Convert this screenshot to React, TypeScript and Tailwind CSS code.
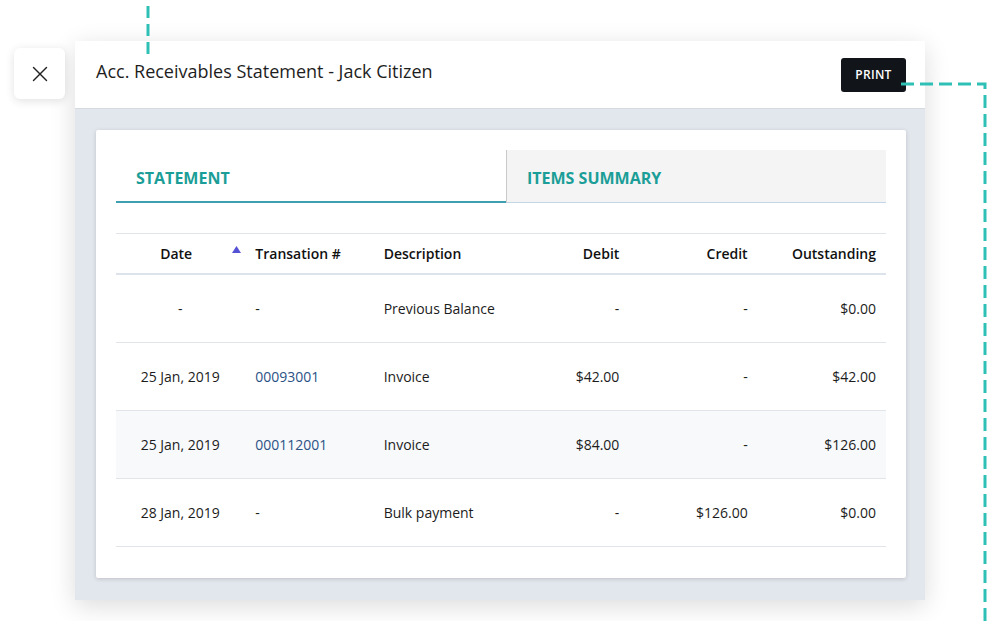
import { X } from "lucide-react";

const rows = [
  { date: "-", txn: "-", link: false, desc: "Previous Balance", debit: "-", credit: "-", out: "$0.00" },
  { date: "25 Jan, 2019", txn: "00093001", link: true, desc: "Invoice", debit: "$42.00", credit: "-", out: "$42.00" },
  { date: "25 Jan, 2019", txn: "000112001", link: true, desc: "Invoice", debit: "$84.00", credit: "-", out: "$126.00", shaded: true },
  { date: "28 Jan, 2019", txn: "-", link: false, desc: "Bulk payment", debit: "-", credit: "$126.00", out: "$0.00" },
];

export default function App() {
  return (
    <div
      className="relative w-[1003px] h-[621px] bg-white overflow-hidden text-[#1c1c1c]"
      style={{ fontFamily: '"Open Sans", "Noto Sans", sans-serif' }}
    >
      {/* Callout lines */}
      <svg className="absolute left-0 top-0 pointer-events-none z-10" width="1003" height="621">
        <path d="M148 6 V54" stroke="#2ebfb5" strokeWidth="3" strokeDasharray="12 6" fill="none" />
        <path d="M901 84 H985 V621" stroke="#2ebfb5" strokeWidth="3" strokeDasharray="13 6" fill="none" />
      </svg>

      {/* Close */}
      <button className="absolute left-[14px] top-[48px] w-[51px] h-[51px] rounded-md bg-white flex items-center justify-center shadow-[0_2px_10px_rgba(0,0,0,0.12)]">
        <X className="w-[26px] h-[26px] text-[#222]" strokeWidth={1.3} />
      </button>

      <div className="pl-[75px] pt-[41px]">
        <div className="w-[850px] shadow-[0_6px_24px_rgba(0,0,0,0.14)]">
          {/* Header */}
          <div className="h-[68px] bg-white border-b border-[#d6d9dd] flex items-center justify-between pl-[21px] pr-[19px]">
            <h1 className="text-[18px] text-[#1e1e1e] -mt-[6px]">Acc. Receivables Statement - Jack Citizen</h1>
            <button className="w-[65px] h-[34px] rounded-[3px] bg-[#111418] text-white text-[12px] font-semibold tracking-[0.3px]">
              PRINT
            </button>
          </div>

          {/* Body */}
          <div className="bg-[#e2e6ed] pl-[21px] pr-[19px] pt-[21px] pb-[22px]">
            <div className="bg-white rounded-[2px] shadow-[0_1px_4px_rgba(0,0,0,0.16)] px-[20px] pt-[20px] pb-[31px]">
              {/* Tabs */}
              <div className="flex h-[53px]">
                <div className="w-[390px] border-b-2 border-[#3e9fb0] flex items-center pl-[20px] pt-[5px]">
                  <span className="text-[16px] font-bold text-[#1b9e97]">STATEMENT</span>
                </div>
                <div className="flex-1 bg-[#f4f4f4] border-l border-[#c9c9c9] border-b border-b-[#c3d5e6] flex items-center pl-[20px] pt-[3px]">
                  <span className="text-[16px] font-bold text-[#1b9e97]">ITEMS SUMMARY</span>
                </div>
              </div>

              {/* Table */}
              <div className="mt-[30px] border-t border-[#e1e5ea] text-[14px] whitespace-nowrap">
                <div className="grid grid-cols-6 h-[41px] items-center border-b-2 border-[#dde3ea] font-semibold text-[#111]">
                  <div className="relative pl-[10px] pr-[18px] text-center">
                    Date
                    <svg className="absolute right-[3px] top-[3px]" width="9" height="7" viewBox="0 0 9 7">
                      <path d="M4.5 0 L9 7 H0 Z" fill="#5652d6" />
                    </svg>
                  </div>
                  <div className="pl-[11px] pr-[9px]">Transation #</div>
                  <div className="pl-[11px] pr-[9px]">Description</div>
                  <div className="px-[10px] text-right">Debit</div>
                  <div className="px-[10px] text-right">Credit</div>
                  <div className="px-[10px] text-right">Outstanding</div>
                </div>
                {rows.map((r, i) => (
                  <div
                    key={i}
                    className={`grid grid-cols-6 h-[68px] items-center border-b border-[#e1e5ea] ${r.shaded ? "bg-[#f7f9fb]" : ""}`}
                  >
                    <div className="px-[10px] text-center">{r.date}</div>
                    <div className={`pl-[11px] pr-[9px] ${r.link ? "text-[#2c5285]" : ""}`}>{r.txn}</div>
                    <div className="pl-[11px] pr-[9px]">{r.desc}</div>
                    <div className="px-[10px] text-right">{r.debit}</div>
                    <div className="px-[10px] text-right">{r.credit}</div>
                    <div className="px-[10px] text-right">{r.out}</div>
                  </div>
                ))}
              </div>
            </div>
          </div>
        </div>
      </div>
    </div>
  );
}
